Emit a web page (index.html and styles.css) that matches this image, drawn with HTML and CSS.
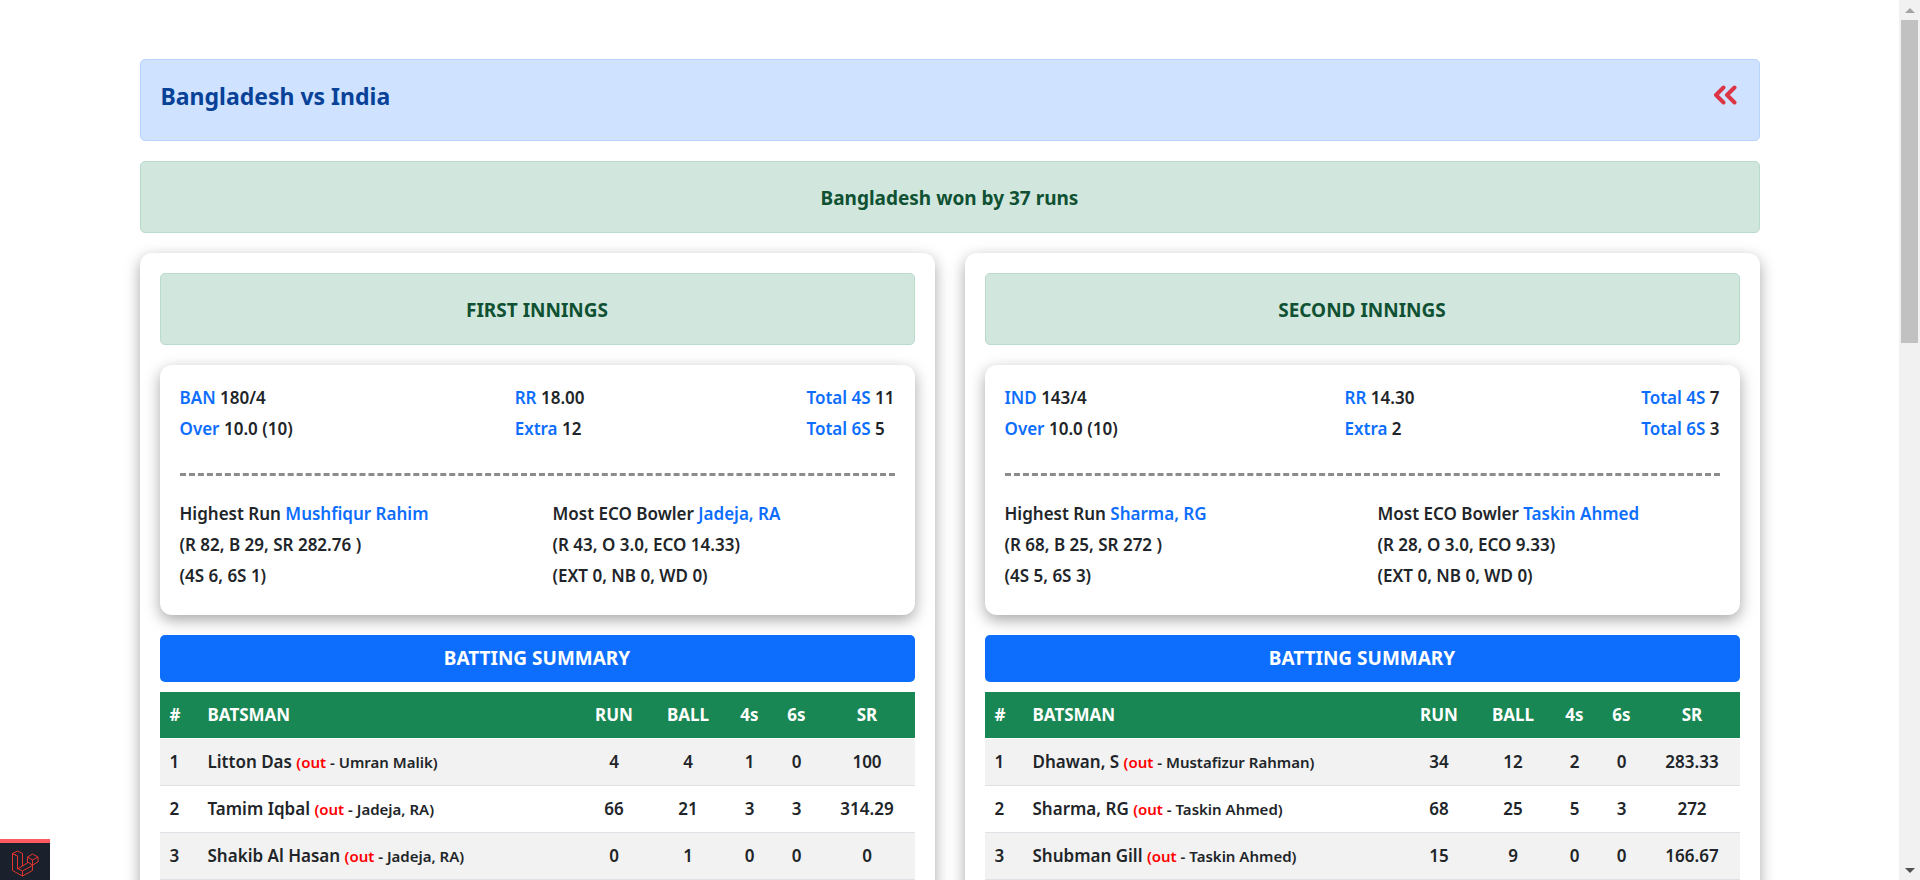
FILE: index.html
```html
<!DOCTYPE html>
<html lang="en">
<head>
<meta charset="utf-8">
<title>Bangladesh vs India</title>
<link rel="stylesheet" href="styles.css">
</head>
<body>
<div class="viewport">
  <main class="container">
    <header class="alert match-header">
      <h1 class="match-title">Bangladesh vs India</h1>
      <a class="back-link" href="#" aria-label="Back">
        <svg viewBox="0 0 24 20" width="24" height="20" fill="none" stroke="currentColor" stroke-width="4" stroke-linecap="round" stroke-linejoin="round"><path d="M10.5 2.500 3 10l7.500 7.500M21.500 2.500 14 10l7.500 7.500"/></svg>
      </a>
    </header>
    <div class="alert alert-success">Bangladesh won by 37 runs</div>

    <div class="innings-grid">
      <section class="panel">
        <h2 class="alert alert-success">FIRST INNINGS</h2>
        <div class="card">
          <div class="totals">
            <div><p><span class="label">BAN</span> 180/4</p><p><span class="label">Over</span> 10.0 (10)</p></div>
            <div><p><span class="label">RR</span> 18.00</p><p><span class="label">Extra</span> 12</p></div>
            <div><p><span class="label">Total 4S</span> 11</p><p><span class="label">Total 6S</span> 5</p></div>
          </div>
          <hr class="divider">
          <div class="leaders">
            <div><p>Highest Run <span class="label">Mushfiqur Rahim</span></p><p>(R 82, B 29, SR 282.76 )</p><p>(4S 6, 6S 1)</p></div>
            <div><p>Most ECO Bowler <span class="label">Jadeja, RA</span></p><p>(R 43, O 3.0, ECO 14.33)</p><p>(EXT 0, NB 0, WD 0)</p></div>
          </div>
        </div>
        <h3 class="summary-title">BATTING SUMMARY</h3>
        <table class="scores">
          <colgroup><col class="col-no"><col><col class="col-run"><col class="col-ball"><col class="col-fours"><col class="col-sixes"><col class="col-rate"></colgroup>
          <thead><tr><th>#</th><th>BATSMAN</th><th>RUN</th><th>BALL</th><th>4s</th><th>6s</th><th>SR</th></tr></thead>
          <tbody>
            <tr><td>1</td><td>Litton Das <small><span class="out">(out</span> - Umran Malik)</small></td><td>4</td><td>4</td><td>1</td><td>0</td><td>100</td></tr>
            <tr><td>2</td><td>Tamim Iqbal <small><span class="out">(out</span> - Jadeja, RA)</small></td><td>66</td><td>21</td><td>3</td><td>3</td><td>314.29</td></tr>
            <tr><td>3</td><td>Shakib Al Hasan <small><span class="out">(out</span> - Jadeja, RA)</small></td><td>0</td><td>1</td><td>0</td><td>0</td><td>0</td></tr>
          </tbody>
        </table>
      </section>

      <section class="panel">
        <h2 class="alert alert-success">SECOND INNINGS</h2>
        <div class="card">
          <div class="totals">
            <div><p><span class="label">IND</span> 143/4</p><p><span class="label">Over</span> 10.0 (10)</p></div>
            <div><p><span class="label">RR</span> 14.30</p><p><span class="label">Extra</span> 2</p></div>
            <div><p><span class="label">Total 4S</span> 7</p><p><span class="label">Total 6S</span> 3</p></div>
          </div>
          <hr class="divider">
          <div class="leaders">
            <div><p>Highest Run <span class="label">Sharma, RG</span></p><p>(R 68, B 25, SR 272 )</p><p>(4S 5, 6S 3)</p></div>
            <div><p>Most ECO Bowler <span class="label">Taskin Ahmed</span></p><p>(R 28, O 3.0, ECO 9.33)</p><p>(EXT 0, NB 0, WD 0)</p></div>
          </div>
        </div>
        <h3 class="summary-title">BATTING SUMMARY</h3>
        <table class="scores">
          <colgroup><col class="col-no"><col><col class="col-run"><col class="col-ball"><col class="col-fours"><col class="col-sixes"><col class="col-rate"></colgroup>
          <thead><tr><th>#</th><th>BATSMAN</th><th>RUN</th><th>BALL</th><th>4s</th><th>6s</th><th>SR</th></tr></thead>
          <tbody>
            <tr><td>1</td><td>Dhawan, S <small><span class="out">(out</span> - Mustafizur Rahman)</small></td><td>34</td><td>12</td><td>2</td><td>0</td><td>283.33</td></tr>
            <tr><td>2</td><td>Sharma, RG <small><span class="out">(out</span> - Taskin Ahmed)</small></td><td>68</td><td>25</td><td>5</td><td>3</td><td>272</td></tr>
            <tr><td>3</td><td>Shubman Gill <small><span class="out">(out</span> - Taskin Ahmed)</small></td><td>15</td><td>9</td><td>0</td><td>0</td><td>166.67</td></tr>
          </tbody>
        </table>
      </section>
    </div>
  </main>
</div>
<div class="scrollbar" aria-hidden="true">
  <svg class="arrow arrow-up" viewBox="0 0 10 5" width="10" height="5"><path d="M0 5 5 0l5 5z"/></svg>
  <div class="track"><div class="thumb"></div></div>
  <svg class="arrow" viewBox="0 0 10 5" width="10" height="5"><path d="M0 0h10L5 5z"/></svg>
</div>
<button class="debug-toggle" type="button" aria-label="Open debug bar">
  <svg viewBox="0 0 27 27" width="27" height="27" fill="none" stroke="#e2352b" stroke-linejoin="round"><path d="M.5 3.500 5.500 1l5 2.500v12.500l-5 3V6zM.5 3.500 5.500 6M.5 3.500V20.500l10 5.500 10-5.500V15M5.500 18.500l5 2.500v5M10.500 21l10-5.500M10.500 16l5-3V7l5-3 5.500 3v5l-5.500 3-5-3M15.500 7l5 3 5.500-3M20.500 10v5"/></svg>
</button>
</body>
</html>
```
FILE: styles.css
```css
* { box-sizing: border-box; }

body {
  margin: 0;
  height: 100vh;
  display: flex;
  overflow: hidden;
  background: #fff;
  color: #212529;
  font-family: "Segoe UI", "Noto Sans", "Open Sans", sans-serif;
  font-size: 17px;
  font-weight: 600;
  line-height: 23px;
}

h1, h2, h3, p { margin: 0; }

.viewport { flex: 1; min-width: 0; overflow: hidden; }

.container {
  max-width: 1620px;
  margin: 0 auto;
  padding-top: 59px;
}

.alert {
  margin-bottom: 20px;
  padding: 21px 20px 19px;
  border: 1px solid;
  border-radius: 5px;
}

.match-header {
  display: flex;
  justify-content: space-between;
  align-items: flex-start;
  min-height: 82px;
  background: #cfe2ff;
  border-color: #b6d4fe;
  color: #084298;
}

.match-title { font-size: 23px; font-weight: 700; line-height: 30px; }

.back-link { color: #dc3545; padding: 4px 2px 0 0; line-height: 0; }

.alert-success {
  background: #d1e7dd;
  border-color: #badbcc;
  color: #0f5132;
  font-size: 19px;
  font-weight: 700;
  line-height: 30px;
  text-align: center;
}

.innings-grid {
  display: grid;
  grid-template-columns: 1fr 1fr;
  gap: 30px;
}

.panel, .card {
  padding: 20px;
  border-radius: 12px;
  background: #fff;
  box-shadow: 0 5px 15px rgba(0, 0, 0, .35);
}

.card { margin-bottom: 20px; }

.card p { padding-top: 1px; margin-bottom: 7px; }

.label { color: #0d6efd; }

.totals { display: flex; justify-content: space-between; }

.divider {
  margin: 26px 0 25px;
  border: 0;
  border-top: 3px dashed #8c8c8c;
}

.leaders { display: grid; grid-template-columns: 373px 1fr; }

.leaders p:last-child { margin-bottom: 8px; }

.summary-title {
  margin-bottom: 10px;
  padding: 10px;
  border-radius: 5px;
  background: #0d6efd;
  color: #fff;
  font-size: 19px;
  font-weight: 700;
  line-height: 27px;
  text-align: center;
}

.scores {
  width: 100%;
  margin-bottom: 20px;
  table-layout: fixed;
  border-collapse: collapse;
  text-align: center;
}

.scores th, .scores td { padding: 11px 10px; line-height: 24px; }

.scores th { background: #198754; border-bottom: 1px solid #fff; color: #fff; font-weight: 700; }

.scores td { border-bottom: 1px solid #dee2e6; white-space: nowrap; }

.scores th:nth-child(-n+2), .scores td:nth-child(-n+2) { text-align: left; }

.scores tbody tr:nth-child(odd) { background: #f2f2f2; }

.scores small { font-size: 15px; }

.col-no { width: 38px; }
.col-run { width: 73px; }
.col-ball { width: 75px; }
.col-fours { width: 48px; }
.col-sixes { width: 46px; }
.col-rate { width: 95px; }

.out { color: #f00; }

.scrollbar {
  width: 21px;
  display: flex;
  flex-direction: column;
  align-items: center;
  padding: 8px 0 7px;
  background: #f1f1f1;
}

.arrow { fill: #505050; }
.arrow-up { fill: #a3a3a3; }

.track { flex: 1; padding: 7px 0; }

.thumb { width: 17px; height: 38.4%; background: #c1c1c1; }

.debug-toggle {
  position: fixed;
  left: 0;
  bottom: 0;
  width: 50px;
  height: 41px;
  padding: 3px 0 0;
  border: 0;
  border-top: 4px solid #ff5a5f;
  background: #1b212c;
  line-height: 0;
}
```
